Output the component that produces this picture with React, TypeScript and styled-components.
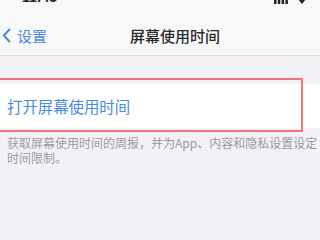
import * as React from "react"
import styled, {createGlobalStyle} from "styled-components"

const GlobalStyle = createGlobalStyle`
  html, body {
    margin: 0;
    padding: 0;
    background: #f2f2f6;
    font-family: "Noto Sans CJK SC", "Liberation Sans", sans-serif;
  }
`

const Screen = styled.div`
  width: 320px;
  height: 240px;
  overflow: hidden;
  background: #f2f2f6;
`

const NavBar = styled.div`
  height: 56px;
  background: #f8f8f9;
  border-bottom: 1px solid #e2e2e6;
  box-sizing: border-box;
`

const StatusBar = styled.div`
  height: 5px;
  overflow: hidden;
  display: flex;
  justify-content: space-between;
  padding: 0 14px 0 22px;
`

const Clock = styled.span`
  margin-top: -10px;
  font-family: "Liberation Sans", sans-serif;
  font-size: 14px;
  font-weight: 700;
  color: #222;
  line-height: 14px;
`

const Indicators = styled.div`
  display: flex;
  gap: 10px;
  margin-top: -6px;
`

const NavRow = styled.div`
  display: grid;
  grid-template-columns: 1.3fr auto 1fr;
  align-items: center;
  height: 34px;
  margin-top: 13px;
`

const Back = styled.div`
  display: flex;
  align-items: center;
  gap: 6px;
  color: #4a8ae0;
  font-size: 15px;
  padding-left: 2px;
`

const Title = styled.div`
  font-size: 15px;
  color: #2a2a2c;
  font-weight: 500;
`

const Section = styled.div`
  position: relative;
  margin-top: 28px;
`

const Row = styled.div`
  height: 44px;
  background: #fff;
  display: flex;
  align-items: center;
  padding-left: 7px;
  color: #4a8ae0;
  font-size: 15.4px;
`

const Highlight = styled.div`
  position: absolute;
  left: -4px;
  top: -6px;
  width: 307px;
  height: 54px;
  border: 2px solid #f07676;
  box-sizing: border-box;
  pointer-events: none;
`

const Footnote = styled.div`
  padding: 7px 0 0 7px;
  font-size: 12px;
  line-height: 15px;
  color: #9a9aa0;
`

export default function App() {
  return (
    <Screen>
      <GlobalStyle />
      <NavBar>
        <StatusBar>
          <Clock>11:43</Clock>
          <Indicators>
            <svg width="14" height="10" viewBox="0 0 14 10">
              <rect x="0" y="6" width="2.5" height="4" fill="#222" />
              <rect x="3.8" y="4" width="2.5" height="6" fill="#222" />
              <rect x="7.6" y="2" width="2.5" height="8" fill="#222" />
              <rect x="11.4" y="0" width="2.5" height="10" fill="#222" />
            </svg>
            <svg width="8" height="10" viewBox="0 0 8 10">
              <path d="M4 10 L0 5 Q4 1 8 5 Z" fill="#222" />
            </svg>
          </Indicators>
        </StatusBar>
        <NavRow>
          <Back>
            <svg width="9" height="15" viewBox="0 0 9 15">
              <path d="M7.5 1.5 L1.8 7.5 L7.5 13.5" fill="none" stroke="#4a8ae0" strokeWidth="2" strokeLinecap="round" strokeLinejoin="round" />
            </svg>
            <span>设置</span>
          </Back>
          <Title>屏幕使用时间</Title>
          <div />
        </NavRow>
      </NavBar>
      <Section>
        <Row>打开屏幕使用时间</Row>
        <Highlight />
      </Section>
      <Footnote>获取屏幕使用时间的周报，并为App、内容和隐私设置设定时间限制。</Footnote>
    </Screen>
  )
}
